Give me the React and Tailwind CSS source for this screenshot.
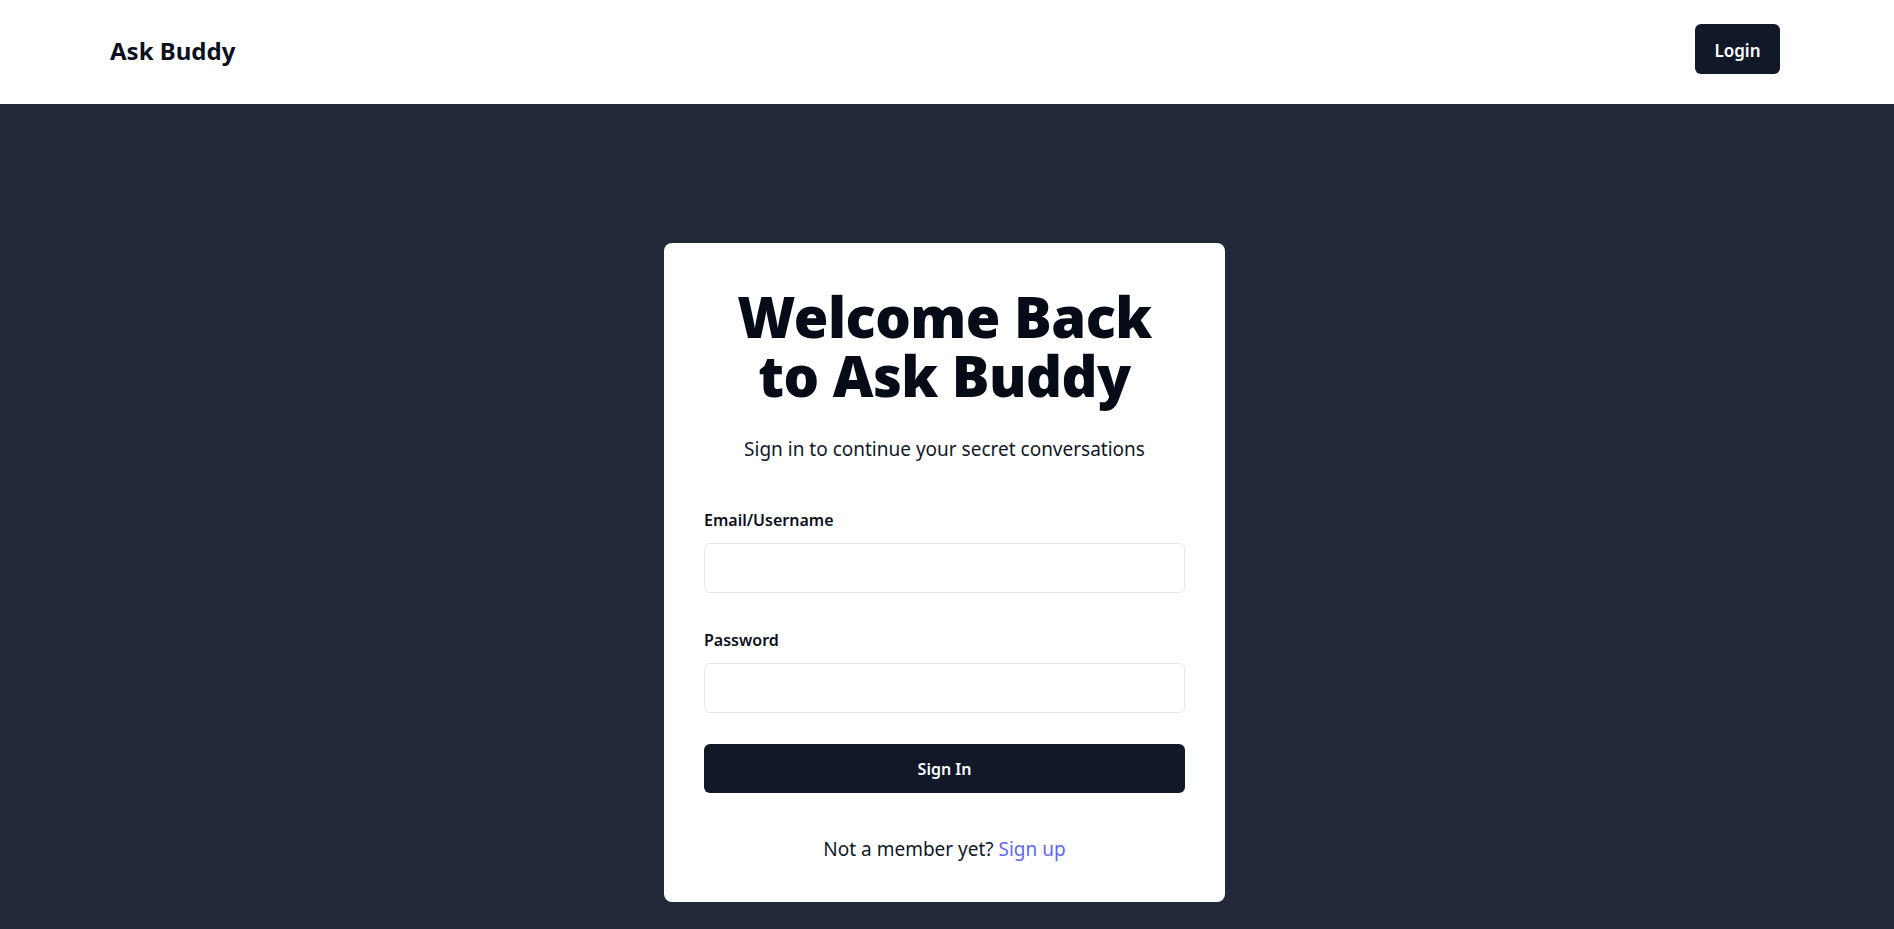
export default function App() {
  return (
    <div className="min-h-screen flex flex-col bg-[#212938]" style={{ fontFamily: '"Noto Sans", "Open Sans", sans-serif' }}>
      <header className="h-[104px] bg-white flex items-center justify-between pl-[110px] pr-[114px] shrink-0">
        <div className="text-[24px] font-bold text-[#0b1120] leading-none -mt-[2px]">Ask Buddy</div>
        <button className="self-start mt-[24px] h-[50px] w-[85px] rounded-md bg-[#111827] text-white text-[17px] font-semibold pt-[3px]">Login</button>
      </header>
      <main className="flex-1 flex justify-center pt-[139px] pb-[27px] pr-[5px]">
        <div className="w-[561px] bg-white rounded-lg px-10 pt-[44px] pb-[37px] flex flex-col">
          <h1 className="text-center text-[56px] leading-[59px] font-black tracking-[-0.5px] text-[#060b18] px-6">
            Welcome Back to Ask Buddy
          </h1>
          <p className="mt-[30px] text-center text-[19px] leading-[28px] text-[#111827]">
            Sign in to continue your secret conversations
          </p>
          <label className="mt-[43px] text-[16px] leading-[28px] font-semibold text-[#0b1120]">Email/Username</label>
          <input className="mt-[9px] h-[50px] w-full rounded-md border border-[#e5e7eb] outline-none px-3" />
          <label className="mt-[33px] text-[16px] leading-[28px] font-semibold text-[#0b1120]">Password</label>
          <input type="password" className="mt-[9px] h-[50px] w-full rounded-md border border-[#e5e7eb] outline-none px-3" />
          <button className="mt-[31px] h-[49px] w-full rounded-md bg-[#111827] text-white text-[16px] font-semibold">Sign In</button>
          <p className="mt-[42px] text-center text-[19px] leading-[28px] text-[#111827]">
            Not a member yet? <a className="text-[#6366f1]">Sign up</a>
          </p>
        </div>
      </main>
    </div>
  );
}
